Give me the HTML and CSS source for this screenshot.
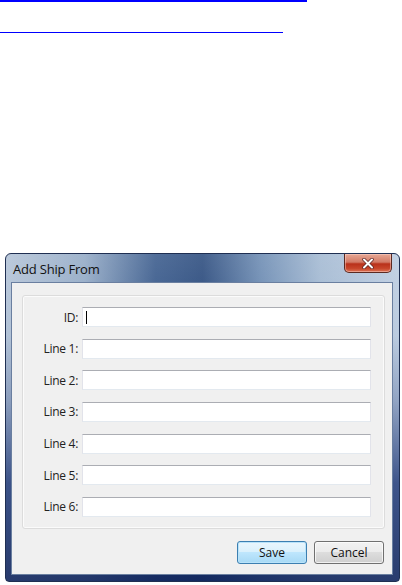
FILE: index.html
```html
<!DOCTYPE html>
<html lang="en">
<head>
    <meta charset="UTF-8">
    <title>Add Ship From</title>
    <link rel="stylesheet" href="styles.css">
</head>
<body>
    <div class="doc-links">
        <a href="#" class="doc-link doc-link-1"></a>
        <a href="#" class="doc-link doc-link-2"></a>
    </div>

    <div class="window">
        <div class="title-bar">
            <span class="title">Add Ship From</span>
            <button class="close-btn" aria-label="Close">
                <svg width="12" height="11" viewBox="0 0 12 11">
                    <path d="M2 1.5 L10 9.5 M10 1.5 L2 9.5" stroke="#5a2020" stroke-width="3.4" stroke-linecap="round"/>
                    <path d="M2 1.5 L10 9.5 M10 1.5 L2 9.5" stroke="#ffffff" stroke-width="2" stroke-linecap="round"/>
                </svg>
            </button>
        </div>
        <div class="client">
            <div class="group">
                <label for="f-id">ID:</label>
                <div class="textbox"><span class="caret"></span></div>
                <label>Line 1:</label>
                <div class="textbox"></div>
                <label>Line 2:</label>
                <div class="textbox"></div>
                <label>Line 3:</label>
                <div class="textbox"></div>
                <label>Line 4:</label>
                <div class="textbox"></div>
                <label>Line 5:</label>
                <div class="textbox"></div>
                <label>Line 6:</label>
                <div class="textbox"></div>
            </div>
            <div class="buttons">
                <button class="btn btn-default">Save</button>
                <button class="btn">Cancel</button>
            </div>
        </div>
    </div>
</body>
</html>
```

FILE: styles.css
```css
body { margin: 0; background: #ffffff; font-family: "Open Sans", "Noto Sans", Arial, sans-serif; width: 402px; height: 585px; overflow: hidden; }

.doc-links { display: flex; flex-direction: column; align-items: flex-start; }
.doc-link { display: block; background: #0000ff; }
.doc-link-1 { width: 307px; height: 2px; }
.doc-link-2 { width: 283px; height: 1px; margin-top: 30px; }

.window { margin: 220px 0 0 5px; width: 395px; height: 329px; box-sizing: border-box; display: flex; flex-direction: column; border: 1px solid #1f2f52; border-radius: 6px 6px 4px 4px; padding: 0 6px 6px 5px;
    background:
        linear-gradient(to bottom, rgba(255,255,255,0.12) 0%, rgba(255,255,255,0) 25%, rgba(20,45,110,0.25) 45%, rgba(20,45,110,0.75) 70%, rgba(15,35,90,0.85) 100%),
        linear-gradient(to right, #b3c3d7 0%, #93aac6 20%, #3a5b8c 38%, #2c4c7e 50%, #6d8cb3 65%, #a3b9d2 80%, #bccce0 100%); }

.title-bar { height: 28px; display: flex; justify-content: space-between; align-items: flex-start; padding-left: 2px; }
.title { font-size: 13px; color: #111; margin-top: 6px; letter-spacing: -0.2px; }
.close-btn { width: 48px; height: 19px; margin: 0 1px 0 0; padding: 0; border: 1px solid #5b2a22; border-top: none; border-radius: 0 0 5px 5px; display: flex; align-items: center; justify-content: center;
    background: linear-gradient(to bottom, #e7a895 0%, #d27a66 45%, #b9311a 55%, #c7452a 80%, #dd7558 100%);
    box-shadow: inset 0 0 0 1px rgba(255,220,210,0.45); }

.client { flex: 1; background: #f0f0f0; border: 1px solid #6a7fa0; display: flex; flex-direction: column; padding: 12px 7px 0 10px; }

.group { display: grid; grid-template-columns: 55px 1fr; column-gap: 4px; row-gap: 11.67px; padding: 11px 13px 11px 0; border: 1px solid #dcdcdc; border-radius: 3px; box-shadow: inset 0 0 0 1px #fbfbfb; }
.group label { font-size: 12px; color: #222; text-align: right; align-self: center; letter-spacing: -0.3px; }
.textbox { height: 20px; box-sizing: border-box; background: #ffffff; border: 1px solid #e2e3ea; border-top-color: #abadb3; border-bottom-color: #e3e9ef; position: relative; }
.caret { position: absolute; left: 3px; top: 3px; width: 1px; height: 13px; background: #000; }

.buttons { display: flex; justify-content: flex-end; gap: 7px; margin-top: 12px; padding-right: 1px; }
.btn { width: 70px; height: 23px; font-family: inherit; font-size: 12px; color: #111; border: 1px solid #707070; border-radius: 3px; padding: 0;
    background: linear-gradient(to bottom, #f2f2f2 0%, #ebebeb 49%, #dddddd 50%, #cfcfcf 100%);
    box-shadow: inset 0 0 0 1px rgba(255,255,255,0.7); }
.btn-default { border-color: #3c7fb1; background: linear-gradient(to bottom, #eaf6fd 0%, #d9f0fc 49%, #bee6fd 50%, #a7d9f5 100%); box-shadow: inset 0 0 0 1px #b9e3fa; }
```
